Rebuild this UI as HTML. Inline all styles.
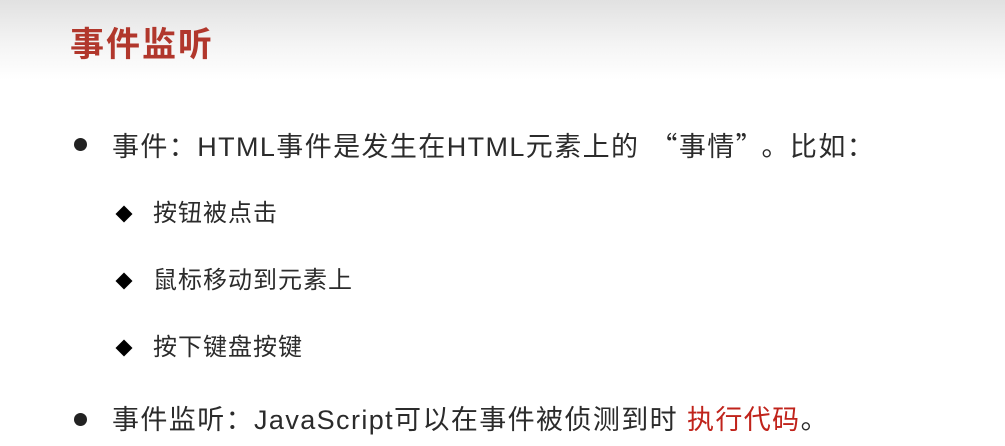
<!DOCTYPE html>
<html><head><meta charset="utf-8"><style>
html,body{margin:0;padding:0;width:1005px;height:446px;overflow:hidden;background:#fff;}
body{position:relative;font-family:"Liberation Sans","Noto Sans CJK SC",sans-serif;color:#2b2b2b;}
.hdr{position:absolute;left:0;top:0;width:1005px;height:80px;background:linear-gradient(#e1e1e1,#f4f4f4 55%,#fff);}
.t{position:absolute;left:70px;top:20px;font-size:34px;font-weight:bold;color:#b1372c;line-height:44px;font-family:"Noto Sans CJK SC",sans-serif;letter-spacing:2px;}
.l{position:absolute;white-space:nowrap;line-height:34px;}
.m{left:112px;font-size:27px;letter-spacing:1.4px;}
.s{left:153px;font-size:24px;letter-spacing:1px;}
.q{font-family:"Noto Sans CJK SC",sans-serif;}
.dot{position:absolute;left:74px;width:13px;height:13px;border-radius:50%;background:#222;}
.dia{position:absolute;left:118px;width:12px;height:12px;background:#000;transform:rotate(45deg);}
.r{color:#c0231b;}
</style></head><body>
<div class="hdr"></div>
<div class="t">事件监听</div>
<div class="dot" style="top:138px"></div>
<div class="l m" style="top:128px">事件：HTML事件是发生在HTML元素上的<span class="q" style="margin-left:11px">“</span>事情<span class="q" style="margin-right:11px">”</span>。比如：</div>
<div class="dia" style="top:208px"></div>
<div class="l s" style="top:197px">按钮被点击</div>
<div class="dia" style="top:275px"></div>
<div class="l s" style="top:264px">鼠标移动到元素上</div>
<div class="dia" style="top:342px"></div>
<div class="l s" style="top:331px">按下键盘按键</div>
<div class="dot" style="top:413px"></div>
<div class="l m" style="top:403px">事件监听：JavaScript可以在事件被侦测到时 <span class="r">执行代码</span>。</div>
</body></html>
